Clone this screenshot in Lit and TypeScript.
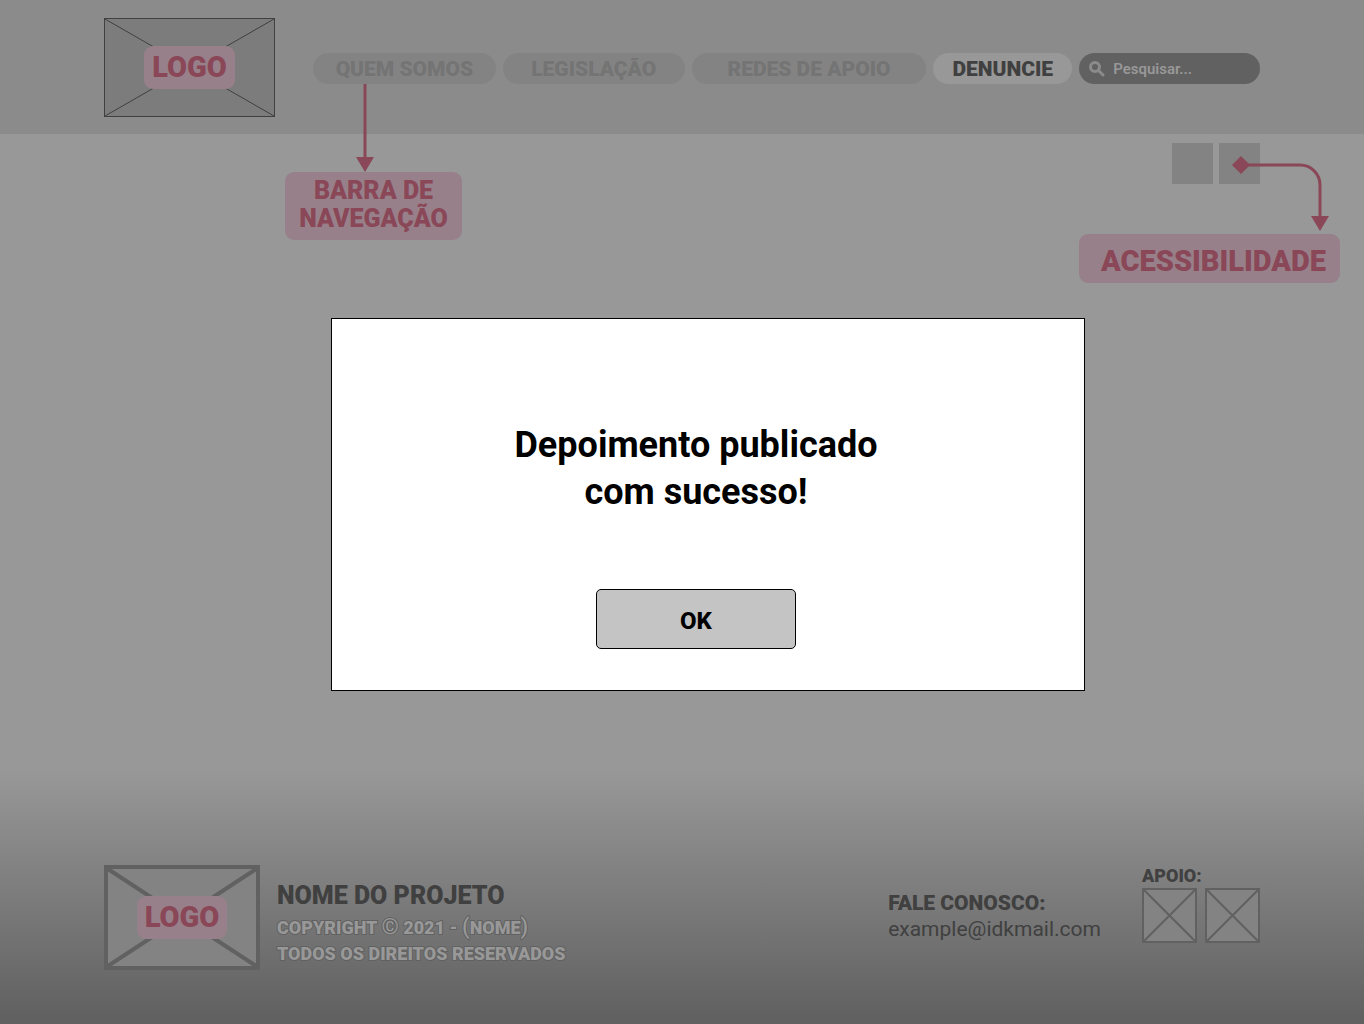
import { LitElement, html, css } from "lit";
import { customElement, property, state } from "lit/decorators.js";

@customElement("logo-box")
class LogoBox extends LitElement {
  @property({ type: Boolean, reflect: true }) heavy = false;

  static styles = css`
    :host {
      display: grid;
      place-items: center;
      box-sizing: border-box;
      flex: none;
      width: 171px;
      height: 99px;
      border: 1px solid #404040;
      background: #7c7c7c;
      --stroke: #404040;
      --weight: 1px;
    }
    :host([heavy]) {
      width: 156px;
      height: 105px;
      border: 4px solid #616161;
      background: #838383;
      --stroke: #616161;
      --weight: 4px;
    }
    .cross,
    .tag {
      grid-area: 1 / 1;
    }
    .cross {
      display: block;
      width: 100%;
      height: 100%;
      min-height: 0;
      stroke: var(--stroke);
      stroke-width: var(--weight);
    }
    .tag {
      padding: 0 8px;
      border-radius: 9px;
      background: #98808a;
      color: #894757;
      font-size: 29px;
      font-weight: 900;
      line-height: 43px;
    }
  `;

  render() {
    return html`
      <svg class="cross" viewBox="0 0 100 100" preserveAspectRatio="none" aria-hidden="true">
        <path d="M0 0L100 100M100 0L0 100" vector-effect="non-scaling-stroke" />
      </svg>
      <span class="tag">LOGO</span>
    `;
  }
}

@customElement("app-root")
class AppRoot extends LitElement {
  @state() private open = true;

  static styles = css`
    :host {
      display: block;
      font-family: Roboto, "Liberation Sans", sans-serif;
      color: #404040;
    }
    * {
      box-sizing: border-box;
    }
    .page {
      position: relative;
      display: flex;
      flex-direction: column;
      min-height: 100vh;
      background: #989898;
    }
    .header {
      display: flex;
      align-items: center;
      gap: 38px;
      height: 134px;
      padding: 0 104px;
      background: #8b8b8b;
    }
    .bar {
      display: grid;
      grid-template-columns: 183fr 182fr 235fr 139fr 181fr;
      flex: 1;
      gap: 7px;
      margin: 3px 0 0;
    }
    .item {
      position: relative;
      display: flex;
      min-width: 0;
    }
    .pill {
      flex: 1;
      height: 31px;
      border-radius: 16px;
      background: #838383;
      color: #747474;
      font-size: 21px;
      font-weight: 900;
      line-height: 32px;
      text-align: center;
      text-decoration: none;
      white-space: nowrap;
    }
    .pill.active {
      background: #989898;
      color: #404040;
    }
    .search {
      display: flex;
      align-items: center;
      gap: 8px;
      min-width: 0;
      height: 31px;
      padding: 0 10px;
      border-radius: 16px;
      background: #616161;
    }
    .lens {
      flex: none;
      width: 16px;
      height: 16px;
      fill: none;
      stroke: #8b8b8b;
      stroke-width: 3;
      stroke-linecap: round;
    }
    .query {
      flex: 1;
      min-width: 0;
      padding: 0;
      border: 0;
      outline: 0;
      background: none;
      color: #989898;
      font: 600 15px/20px Roboto, "Liberation Sans", sans-serif;
    }
    .query::placeholder {
      color: #989898;
      opacity: 1;
    }
    .note {
      position: absolute;
      display: flex;
      flex-direction: column;
      color: #894757;
      font-weight: 900;
      text-align: center;
      white-space: nowrap;
    }
    .note-nav {
      top: 31px;
      left: -28px;
    }
    .note-access {
      top: 13px;
      right: -80px;
    }
    .arrow {
      display: block;
      fill: none;
      stroke: #894757;
      stroke-width: 3;
    }
    .solid {
      fill: #894757;
      stroke: none;
    }
    .arrow-nav {
      width: 18px;
      height: 88px;
      margin-left: 71px;
    }
    .arrow-access {
      align-self: flex-end;
      width: 98px;
      height: 78px;
      margin-right: 10px;
    }
    .label {
      border-radius: 9px;
      background: #98808a;
    }
    .label-nav {
      width: 177px;
      padding: 5px 0 7px;
      font-size: 25px;
      line-height: 28px;
    }
    .label-access {
      width: 261px;
      padding: 5px 0 0 8px;
      font-size: 29px;
      line-height: 44px;
    }
    .main {
      flex: 1;
      padding: 9px 104px;
    }
    .tools {
      display: flex;
      justify-content: flex-end;
      gap: 6px;
    }
    .tool-slot {
      position: relative;
      display: flex;
    }
    .tool {
      width: 41px;
      height: 41px;
      padding: 0;
      border: 0;
      background: #838383;
    }
    .footer {
      display: flex;
      justify-content: space-between;
      gap: 17px;
      padding: 101px 104px 54px;
      background: linear-gradient(#989898 2%, #616161 97%);
    }
    .brand {
      display: flex;
      gap: 17px;
    }
    .project {
      padding: 17px 0 0;
    }
    .name,
    .legal,
    .heading,
    .support-title {
      margin: 0;
    }
    .name {
      padding-bottom: 5px;
      font-size: 25px;
      font-weight: 900;
      line-height: 28px;
    }
    .legal {
      color: #989898;
      font-size: 18px;
      font-weight: 900;
      line-height: 26px;
      -webkit-text-stroke: 2px #616161;
      paint-order: stroke fill;
    }
    .tall {
      font-size: 22px;
      font-weight: 500;
      line-height: 20px;
    }
    .side {
      display: flex;
      gap: 41px;
    }
    .contact {
      padding: 25px 0 0;
      font-size: 21px;
      line-height: 26px;
    }
    .heading {
      font-size: 21px;
      font-weight: 900;
    }
    .mail {
      color: #404040;
      text-decoration: none;
    }
    .support-title {
      padding-bottom: 2px;
      font-size: 18px;
      font-weight: 900;
      line-height: 21px;
    }
    .partners {
      display: flex;
      gap: 8px;
    }
    .partner {
      display: block;
      width: 55px;
      height: 55px;
      fill: #838383;
      stroke: #616161;
      stroke-width: 2;
    }
    .overlay {
      position: absolute;
      inset: 0;
      display: grid;
      place-items: center;
      padding: 0 0 15px 52px;
    }
    .dialog {
      display: flex;
      flex-direction: column;
      align-items: center;
      gap: 73px;
      width: 100%;
      max-width: 754px;
      padding: 103px 24px 41px 0;
      border: 1px solid #000;
      background: #fff;
      color: #000;
      text-align: center;
    }
    .message {
      margin: 0;
      font-size: 36px;
      font-weight: 700;
      line-height: 47px;
    }
    .ok {
      width: 200px;
      height: 60px;
      padding: 4px 0 0;
      border: 1px solid #000;
      border-radius: 5px;
      background: #c4c4c4;
      color: #000;
      font: 800 24px/28px Roboto, "Liberation Sans", sans-serif;
    }
  `;

  private close() {
    this.open = false;
  }

  private partner() {
    return html`<svg class="partner" viewBox="0 0 55 55" role="img" aria-label="Apoio">
      <path d="M1 1H54V54H1ZM1 1L54 54M54 1L1 54" />
    </svg>`;
  }

  render() {
    return html`
      <div class="page">
        <header class="header">
          <logo-box></logo-box>
          <nav class="bar">
            <div class="item">
              <a class="pill" href="#quem-somos">QUEM SOMOS</a>
              <div class="note note-nav">
                <svg class="arrow arrow-nav" viewBox="0 0 18 88" aria-hidden="true">
                  <path d="M9 0V75" />
                  <path class="solid" d="M0 73H18L9 88Z" />
                </svg>
                <span class="label label-nav">BARRA DE<br />NAVEGAÇÃO</span>
              </div>
            </div>
            <div class="item"><a class="pill" href="#legislacao">LEGISLAÇÃO</a></div>
            <div class="item"><a class="pill" href="#redes">REDES DE APOIO</a></div>
            <div class="item"><a class="pill active" href="#denuncie">DENUNCIE</a></div>
            <label class="search">
              <svg class="lens" viewBox="0 0 16 16" aria-hidden="true">
                <circle cx="6" cy="6" r="4.5" />
                <path d="M9.5 9.5L14 14" />
              </svg>
              <input class="query" type="text" placeholder="Pesquisar..." aria-label="Pesquisar" />
            </label>
          </nav>
        </header>

        <main class="main">
          <div class="tools">
            <div class="tool-slot"><button class="tool" aria-label="Contraste"></button></div>
            <div class="tool-slot">
              <button class="tool" aria-label="Acessibilidade"></button>
              <div class="note note-access">
                <svg class="arrow arrow-access" viewBox="0 0 98 78" aria-hidden="true">
                  <path d="M9 9H68A20 20 0 0 1 88 29V62" />
                  <path class="solid" d="M0 9L9 0L18 9L9 18Z" />
                  <path class="solid" d="M79 60H97L88 75Z" />
                </svg>
                <span class="label label-access">ACESSIBILIDADE</span>
              </div>
            </div>
          </div>
        </main>

        <footer class="footer">
          <div class="brand">
            <logo-box heavy></logo-box>
            <div class="project">
              <h2 class="name">NOME DO PROJETO</h2>
              <p class="legal">
                COPYRIGHT <span class="tall">©</span> 2021 - <span class="tall">(</span>NOME<span class="tall">)</span
                ><br />TODOS OS DIREITOS RESERVADOS
              </p>
            </div>
          </div>
          <div class="side">
            <div class="contact">
              <h2 class="heading">FALE CONOSCO:</h2>
              <a class="mail" href="mailto:example@idkmail.com">example@idkmail.com</a>
            </div>
            <div class="support">
              <h2 class="support-title">APOIO:</h2>
              <div class="partners">${this.partner()}${this.partner()}</div>
            </div>
          </div>
        </footer>

        ${this.open
          ? html`<div class="overlay">
              <div class="dialog" role="dialog" aria-modal="true" aria-labelledby="message">
                <p class="message" id="message">Depoimento publicado<br />com sucesso!</p>
                <button class="ok" @click=${this.close}>OK</button>
              </div>
            </div>`
          : null}
      </div>
    `;
  }
}
